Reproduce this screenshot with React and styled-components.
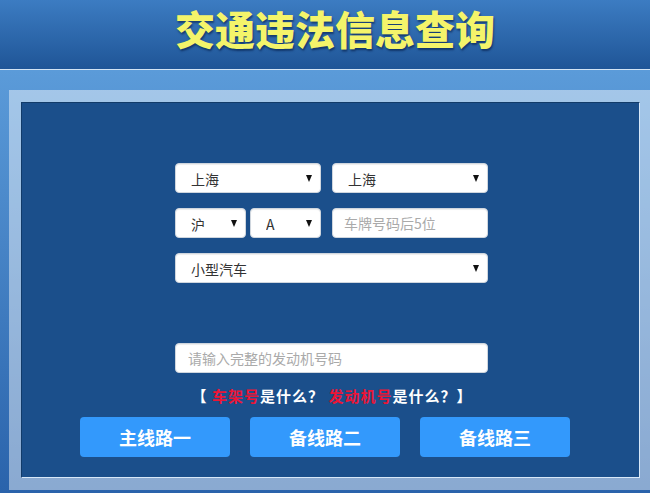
import React, { useState } from 'react'
import styled, { createGlobalStyle } from 'styled-components'

const GlobalStyle = createGlobalStyle`
  html, body {
    margin: 0;
    padding: 0;
    height: 100%;
    overflow: hidden;
  }
  body {
    font-family: "Noto Sans CJK SC", "Liberation Sans", sans-serif;
    background: linear-gradient(to bottom, #5b9bd9 0px, #5b9bd9 70px, #2a63ab 493px);
  }
  #root {
    height: 100%;
  }
`;

const Header = styled.header`
  box-sizing: border-box;
  height: 70px;
  padding: 4px 0 0 20px;
  display: flex;
  justify-content: center;
  background: linear-gradient(to bottom, #3c7cc2, #1f5597);
  border-bottom: 1px solid #d3e4f4;
`;

const Title = styled.h1`
  margin: 0;
  font-size: 40px;
  line-height: 48px;
  font-weight: 900;
  color: #f4f46a;
  text-shadow: 1px 2px 2px rgba(0, 20, 60, 0.55);
`;

const Main = styled.main`
  padding: 20px 0 0 9px;
`;

const Frame = styled.div`
  width: 643px;
  box-sizing: border-box;
  padding: 12px;
  background: rgba(255, 255, 255, 0.45);
`;

const Panel = styled.section`
  height: 374px;
  background: #1b4f8b;
  border-top: 1px solid #123b69;
  border-left: 1px solid #123b69;
  border-bottom: 1px solid #d8e8f8;
  border-right: 1px solid #d8e8f8;
  display: flex;
  flex-direction: column;
`;

const Form = styled.div`
  width: 313px;
  margin: 60px 0 0 153px;
  display: flex;
  flex-direction: column;
  gap: 15px;
`;

const Row = styled.div`
  display: flex;
  gap: ${p => p.$gap || 11}px;
`;

const SelectWrap = styled.div`
  position: relative;
  width: ${p => p.$w}px;
  height: 30px;
  flex: none;
`;

const Select = styled.select`
  appearance: none;
  -webkit-appearance: none;
  width: 100%;
  height: 100%;
  box-sizing: border-box;
  padding: 2px 20px 0 15px;
  border: 1px solid #cfd6de;
  border-radius: 4px;
  background: #fff;
  box-shadow: inset 0 1px 1px rgba(0, 0, 0, 0.075);
  font-family: "Noto Sans CJK SC", "Liberation Sans", sans-serif;
  font-size: 14px;
  color: #333;
  outline: none;
`;

const Arrow = styled.span`
  position: absolute;
  right: 9px;
  top: 12px;
  width: 0;
  height: 0;
  border-left: 3.5px solid transparent;
  border-right: 3.5px solid transparent;
  border-top: 7px solid #111;
  pointer-events: none;
`;

const Input = styled.input`
  display: block;
  width: ${p => p.$w}px;
  height: 30px;
  flex: none;
  box-sizing: border-box;
  padding: 0 ${p => p.$pad || 11}px;
  border: 1px solid #cfd6de;
  border-radius: 4px;
  background: #fff;
  box-shadow: inset 0 1px 1px rgba(0, 0, 0, 0.075);
  font-family: "Noto Sans CJK SC", "Liberation Sans", sans-serif;
  font-size: 14px;
  color: #333;
  outline: none;

  &::placeholder {
    color: #aaa;
  }
`;

const EngineBox = styled.div`
  margin: 60px 0 0 153px;
`;

const Help = styled.p`
  margin: 13px 0 0 0;
  text-align: center;
  font-size: 15px;
  line-height: 20px;
  font-weight: 700;
  letter-spacing: 1px;
  color: #fff;
  padding-left: 3px;
`;

const Red = styled.span`
  color: #ec1536;
`;

const Buttons = styled.div`
  display: flex;
  gap: 20px;
  margin: 11px 0 0 58px;
`;

const Button = styled.button`
  width: 150px;
  height: 40px;
  border: none;
  border-radius: 4px;
  background: #3399fc;
  color: #fff;
  font-family: "Noto Sans CJK SC", "Liberation Sans", sans-serif;
  font-size: 18px;
  font-weight: 700;
  cursor: pointer;
`;

function Dropdown({ width, options, value, onChange }) {
  return (
    <SelectWrap $w={width}>
      <Select value={value} onChange={e => onChange(e.target.value)}>
        {options.map(o => <option key={o}>{o}</option>)}
      </Select>
      <Arrow />
    </SelectWrap>
  )
}

export default function App() {
  const [province, setProvince] = useState('上海')
  const [city, setCity] = useState('上海')
  const [prefix, setPrefix] = useState('沪')
  const [letter, setLetter] = useState('A')
  const [carType, setCarType] = useState('小型汽车')
  const [plate, setPlate] = useState('')
  const [engine, setEngine] = useState('')

  return (
    <>
      <GlobalStyle />
      <Header>
        <Title>交通违法信息查询</Title>
      </Header>
      <Main>
        <Frame>
          <Panel>
            <Form>
              <Row>
                <Dropdown width={146} options={['上海', '北京']} value={province} onChange={setProvince} />
                <Dropdown width={156} options={['上海', '北京']} value={city} onChange={setCity} />
              </Row>
              <Row>
                <Row $gap={4}>
                  <Dropdown width={71} options={['沪', '京']} value={prefix} onChange={setPrefix} />
                  <Dropdown width={71} options={['A', 'B', 'C']} value={letter} onChange={setLetter} />
                </Row>
                <Input $w={156} placeholder="车牌号码后5位" value={plate} onChange={e => setPlate(e.target.value)} />
              </Row>
              <Dropdown width={313} options={['小型汽车', '大型汽车']} value={carType} onChange={setCarType} />
            </Form>
            <EngineBox>
              <Input $w={313} $pad={12} placeholder="请输入完整的发动机号码" value={engine} onChange={e => setEngine(e.target.value)} />
            </EngineBox>
            <Help>【 <Red>车架号</Red>是什么？ <Red>发动机号</Red>是什么？】</Help>
            <Buttons>
              <Button>主线路一</Button>
              <Button>备线路二</Button>
              <Button>备线路三</Button>
            </Buttons>
          </Panel>
        </Frame>
      </Main>
    </>
  )
}
